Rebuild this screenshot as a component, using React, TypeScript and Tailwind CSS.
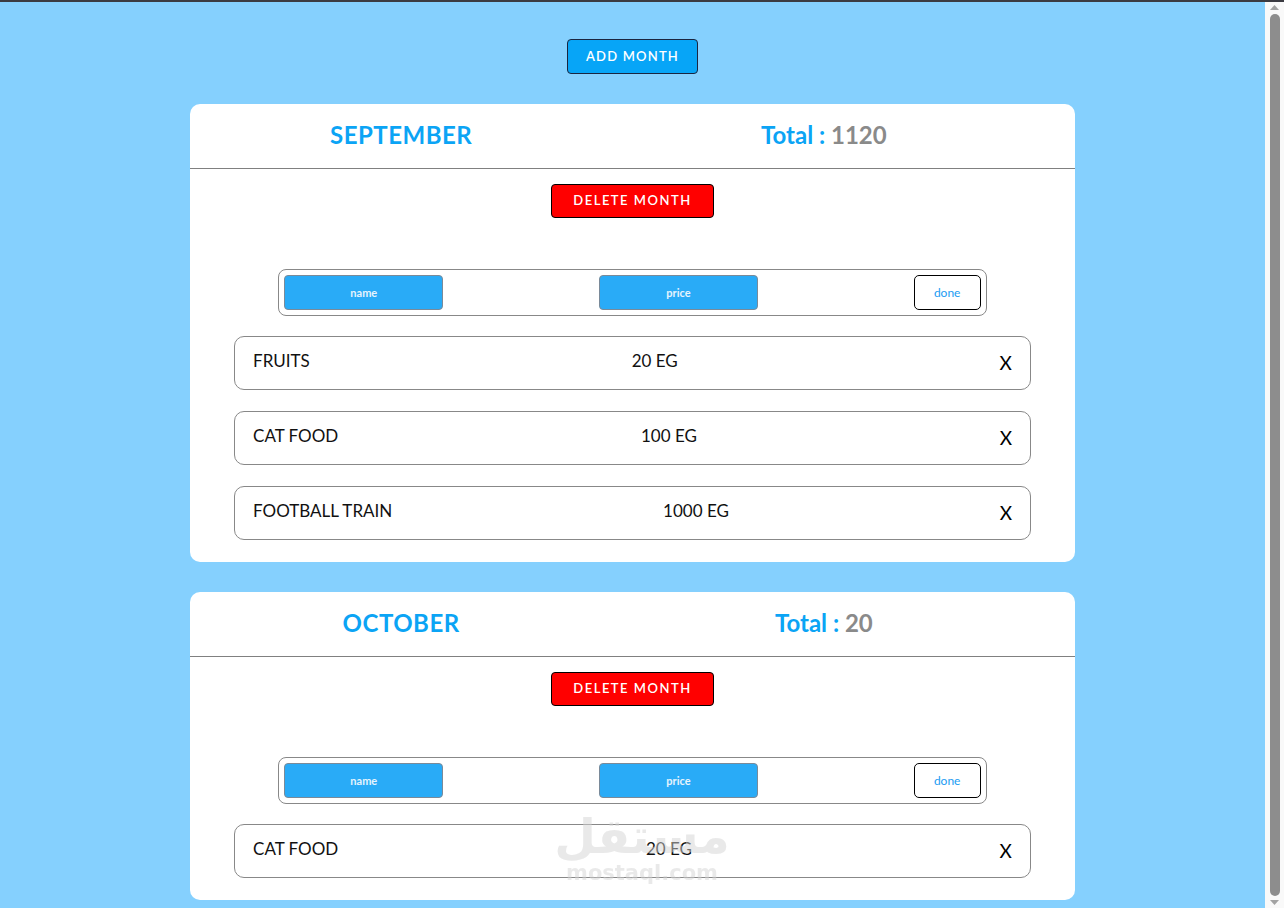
import React, { useState } from 'react';

type Item = { id: number; name: string; price: number };
type Month = { id: number; name: string; items: Item[] };

const initialMonths: Month[] = [
  {
    id: 1,
    name: 'September',
    items: [
      { id: 1, name: 'fruits', price: 20 },
      { id: 2, name: 'cat food', price: 100 },
      { id: 3, name: 'football train', price: 1000 },
    ],
  },
  {
    id: 2,
    name: 'October',
    items: [{ id: 4, name: 'cat food', price: 20 }],
  },
];

const MonthCard: React.FC<{ month: Month; onDelete: () => void; onRemoveItem: (id: number) => void }> = ({ month, onDelete, onRemoveItem }) => {
  const total = month.items.reduce((s, i) => s + i.price, 0);
  return (
    <div className="w-[70%] bg-white rounded-[10px] pb-[22px] shrink-0">
      {/* Header */}
      <div className="grid grid-cols-2 h-[65px] pr-[40px] border-b border-[#808080] items-center pb-[3px]">
        <h2 className="text-center text-[24px] font-bold uppercase text-[#0ba4f5] tracking-[0.5px]">{month.name}</h2>
        <h2 className="text-center text-[24px] font-bold text-[#0ba4f5]">
          Total : <span className="text-[#8a8a8a]">{total}</span>
        </h2>
      </div>

      <div className="flex flex-col items-center">
        <button
          onClick={onDelete}
          className="mt-[15px] w-[163px] h-[34px] bg-[#ff0000] border border-black rounded-[4px] text-white text-[13px] font-semibold uppercase tracking-[1.5px]"
        >
          Delete Month
        </button>

        {/* Add item form */}
        <div className="mt-[51px] w-[80%] h-[47px] border border-[#888] rounded-[8px] p-[5px] flex justify-between items-center">
          <input
            placeholder="name"
            className="w-[159px] h-[35px] bg-[#29abf7] border border-[#7a8a99] rounded-[4px] text-center text-[11px] font-bold text-white placeholder:text-[#e6f4fd] outline-none"
          />
          <input
            placeholder="price"
            className="w-[159px] h-[35px] bg-[#29abf7] border border-[#7a8a99] rounded-[4px] text-center text-[11px] font-bold text-white placeholder:text-[#e6f4fd] outline-none"
          />
          <button className="w-[67px] h-[35px] bg-white border border-black rounded-[5px] text-[12px] text-[#1b9cf2]">done</button>
        </div>

        {/* Items */}
        <div className="mt-[20px] w-[90%] flex flex-col gap-[21px]">
          {month.items.map((item) => (
            <div key={item.id} className="h-[54px] border border-[#888] rounded-[10px] px-[18px] flex justify-between items-center text-[#111] text-[17px] uppercase pb-[4px]">
              <span>{item.name}</span>
              <span>{item.price} EG</span>
              <button onClick={() => onRemoveItem(item.id)} className="text-[19px] text-black pt-[4px]">X</button>
            </div>
          ))}
        </div>
      </div>
    </div>
  );
};

// browser-like scrollbar strip on the right
const ScrollStrip = () => (
  <div className="w-[19px] shrink-0 bg-[#f9f9f9] flex flex-col items-center py-[3px] gap-[4px]">
    <svg width="9" height="5" viewBox="0 0 9 5"><path d="M4.5 0L9 5H0z" fill="#a3a3a3" /></svg>
    <div className="flex-1 w-[10px] rounded-full bg-[#8d8d8d]" />
    <svg width="9" height="5" viewBox="0 0 9 5"><path d="M0 0h9L4.5 5z" fill="#a3a3a3" /></svg>
  </div>
);

export default function App() {
  const [months, setMonths] = useState<Month[]>(initialMonths);

  return (
    <div className="h-screen flex flex-col font-['Lato',sans-serif] relative">
      <div className="h-[2px] bg-[#3b3b42] shrink-0" />
      <div className="flex-1 flex min-h-0">
        <div className="flex-1 overflow-y-auto bg-[#85d0fe]">
          <div className="flex flex-col items-center pt-[37px] pb-[30px] gap-[30px]">
            <button className="w-[131px] h-[35px] bg-[#07a5f7] border border-[#1a2540] rounded-[4px] text-white text-[13px] font-semibold uppercase tracking-[1.2px]">
              Add Month
            </button>
            {months.map((m) => (
              <MonthCard
                key={m.id}
                month={m}
                onDelete={() => setMonths(months.filter((x) => x.id !== m.id))}
                onRemoveItem={(id) =>
                  setMonths(months.map((x) => (x.id === m.id ? { ...x, items: x.items.filter((i) => i.id !== id) } : x)))
                }
              />
            ))}
          </div>
        </div>
        <ScrollStrip />
      </div>

      {/* watermark */}
      <div className="absolute left-1/2 top-[812px] -translate-x-1/2 flex flex-col items-center pointer-events-none opacity-50 text-[#d4d4d4] font-['DejaVu_Sans',sans-serif] font-bold leading-none">
        <span className="text-[48px]">مستقل</span>
        <span className="text-[21px] mt-[3px]">mostaql.com</span>
      </div>
    </div>
  );
}
